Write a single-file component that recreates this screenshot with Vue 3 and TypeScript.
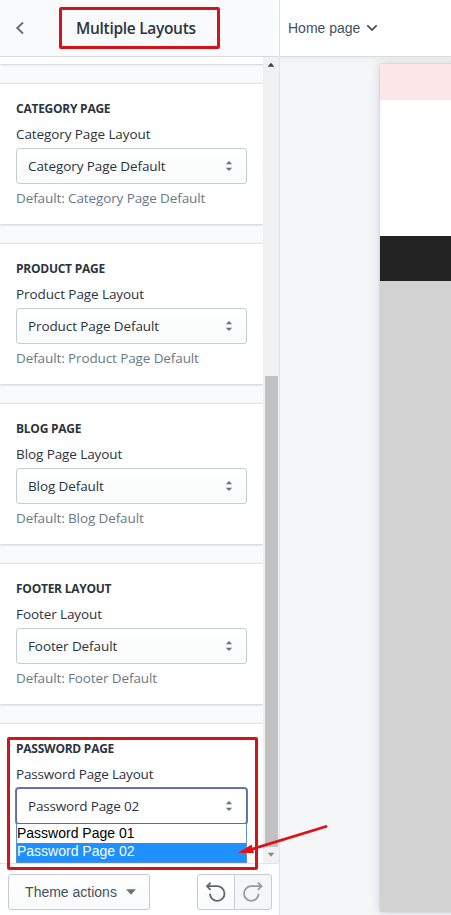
<script setup lang="ts">
interface Section {
  heading: string
  label: string
  value: string
}

const sections: Section[] = [
  { heading: 'CATEGORY PAGE', label: 'Category Page Layout', value: 'Category Page Default' },
  { heading: 'PRODUCT PAGE', label: 'Product Page Layout', value: 'Product Page Default' },
  { heading: 'BLOG PAGE', label: 'Blog Page Layout', value: 'Blog Default' },
  { heading: 'FOOTER LAYOUT', label: 'Footer Layout', value: 'Footer Default' },
]

const options: string[] = ['Password Page 01', 'Password Page 02']
const selected = 'Password Page 02'
</script>

<template>
  <div class="editor">
    <aside class="sidebar">
      <header class="side-head">
        <svg class="back" width="10" height="14" viewBox="0 0 10 14"><path d="M8 1.5 2.3 7 8 12.5" fill="none" stroke="#637381" stroke-width="2" /></svg>
        <h1 class="title">Multiple Layouts</h1>
      </header>

      <div class="body">
        <div class="panels">
          <div class="sliver"></div>
          <section v-for="s in sections" :key="s.heading" class="card">
            <h2>{{ s.heading }}</h2>
            <label>{{ s.label }}</label>
            <div class="select">
              <span>{{ s.value }}</span>
              <svg width="8" height="12" viewBox="0 0 8 12"><path d="M0.8 4.2 4 1l3.2 3.2zM0.8 7.8 4 11l3.2-3.2z" fill="#637381" /></svg>
            </div>
            <p>Default: {{ s.value }}</p>
          </section>
          <section class="card last">
            <h2>PASSWORD PAGE</h2>
            <label>Password Page Layout</label>
            <div class="select focused">
              <span>{{ selected }}</span>
              <svg width="8" height="12" viewBox="0 0 8 12"><path d="M0.8 4.2 4 1l3.2 3.2zM0.8 7.8 4 11l3.2-3.2z" fill="#637381" /></svg>
              <ul class="options">
                <li v-for="o in options" :key="o" :class="{ active: o === selected }">{{ o }}</li>
              </ul>
            </div>
          </section>
        </div>
        <div class="scrollbar">
          <svg width="16" height="17" viewBox="0 0 16 17"><path d="M4.5 10 8 6l3.5 4z" fill="#404040" /></svg>
          <div class="thumb"></div>
          <svg width="16" height="17" viewBox="0 0 16 17"><path d="M4.5 6 8 10l3.5-4z" fill="#8c8c8c" /></svg>
        </div>
      </div>

      <footer class="side-foot">
        <button class="btn theme">
          <span>Theme actions</span>
          <svg width="10" height="6" viewBox="0 0 10 6"><path d="M0 0.3h10L5 5.7z" fill="#637381" /></svg>
        </button>
        <div class="history">
          <button class="btn undo">
            <svg width="22" height="22" viewBox="0 0 22 22" fill="none" stroke="#5b6873" stroke-width="1.8"><path d="M2 5.2H12.2A7.3 7.3 0 1 1 4.9 12.8M5.6 1.6 2 5.2l3.6 3.6" /></svg>
          </button>
          <button class="btn redo">
            <svg width="22" height="22" viewBox="0 0 22 22" fill="none" stroke="#919ba5" stroke-width="1.8"><path d="M19.5 5.2H9.3A7.3 7.3 0 1 0 16.6 12.8M15.9 1.6 19.5 5.2l-3.6 3.6" /></svg>
          </button>
        </div>
      </footer>
    </aside>

    <main class="preview">
      <header class="preview-head">
        <span>Home page</span>
        <svg width="12" height="8" viewBox="0 0 12 8"><path d="M1.3 1.3 6 6l4.7-4.7" fill="none" stroke="#4a5661" stroke-width="1.8" /></svg>
      </header>
      <div class="canvas">
        <div class="page">
          <div class="announce"></div>
          <div class="store-head"></div>
          <div class="store-nav"></div>
          <div class="store-body"></div>
        </div>
      </div>
    </main>

    <div class="mark mark-title"></div>
    <div class="mark mark-select"></div>
    <svg class="arrow" width="92" height="34" viewBox="0 0 92 34">
      <path d="M89 2.5 14 25.5" stroke="#dc1418" stroke-width="2.8" stroke-linecap="round" />
      <path d="M1 29 14.5 20.5 17 29z" fill="#e81015" />
    </svg>
  </div>
</template>

<style>
body {
  margin: 0;
  overflow: hidden;
}
</style>

<style scoped>
* {
  box-sizing: border-box;
}
.editor {
  position: relative;
  display: flex;
  width: 451px;
  height: 915px;
  overflow: hidden;
  background: #f4f6f8;
  color: #2b343e;
  font-family: "Open Sans", "Noto Sans", sans-serif;
  font-size: 14px;
}
.sidebar {
  display: flex;
  flex-direction: column;
  flex: none;
  width: 280px;
  border-right: 1px solid #dfe3e8;
  background: #f9fafb;
}
.side-head {
  display: flex;
  align-items: center;
  flex: none;
  height: 57px;
  padding-left: 15px;
  border-bottom: 1px solid #d9dcdf;
}
.title {
  margin: 0 0 0 51px;
  font-size: 15.5px;
  line-height: 24px;
  font-weight: 600;
  letter-spacing: -0.3px;
}
.body {
  display: flex;
  flex: 1;
  min-height: 0;
}
.panels {
  flex: 1;
  min-width: 0;
  overflow: hidden;
}
.sliver {
  height: 7px;
  background: #fff;
  box-shadow: 0 1px 2px rgba(33, 43, 54, 0.2);
}
.card {
  height: 141px;
  margin-top: 19px;
  padding: 15px 16px 0;
  border-top: 1px solid #e2e5e8;
  background: #fff;
  box-shadow: 0 1px 2px rgba(33, 43, 54, 0.2);
}
h2 {
  margin: 0 0 5px;
  font-size: 12px;
  line-height: 20px;
  font-weight: 700;
  letter-spacing: -0.25px;
}
label {
  display: block;
  height: 24px;
  line-height: 20px;
  font-size: 13.5px;
  letter-spacing: -0.09px;
}
.select {
  position: relative;
  display: flex;
  align-items: center;
  justify-content: space-between;
  width: 231px;
  height: 36px;
  padding: 0 13px 0 11px;
  border: 1px solid #c4cdd5;
  border-radius: 3px;
  background: linear-gradient(#fff, #f9fafb);
  font-size: 13.5px;
  letter-spacing: -0.1px;
}
.last label,
.focused {
  letter-spacing: -0.18px;
}
.focused {
  background: #fff;
  border-color: #5f6aa8;
  box-shadow: 0 0 0 1px #6f78ab;
}
.card p {
  margin: 4px 0 0;
  line-height: 20px;
  font-size: 13.5px;
  letter-spacing: -0.11px;
  color: #6b7986;
}
.options {
  position: absolute;
  top: 35px;
  left: -1px;
  width: 231px;
  height: 39px;
  margin: 0;
  padding: 0;
  border: 1px solid #5c8fd0;
  border-top: 0;
  background: #fff;
  list-style: none;
  font: 14px/18px "Liberation Sans", Arial, sans-serif;
  letter-spacing: 0;
  color: #000;
}
.options li {
  height: 19px;
}
.options .active {
  line-height: 17px;
  background: #1e90ff;
  color: #fff;
}
.scrollbar {
  display: flex;
  flex-direction: column;
  flex: none;
  width: 16px;
  background: #f1f1f1;
}
.thumb {
  flex: none;
  width: 13px;
  height: 471px;
  margin: 302px 0 0 2px;
  background: #c1c1c1;
}
.side-foot {
  display: flex;
  align-items: center;
  justify-content: space-between;
  flex: none;
  height: 52px;
  padding: 5px 7px 0 8px;
  border-top: 1px solid #dfe3e8;
  background: #fff;
}
.btn {
  display: flex;
  align-items: center;
  justify-content: center;
  height: 36px;
  margin: 0;
  padding: 0;
  border: 1px solid #c4cdd5;
  border-radius: 3px;
  background: linear-gradient(#fff, #f9fafb);
  color: #454f5b;
  font: 14px/20px "Liberation Sans", Arial, sans-serif;
}
.theme {
  gap: 9px;
  width: 142px;
  padding-left: 3px;
}
.history {
  display: flex;
}
.undo {
  width: 38px;
  border-radius: 3px 0 0 3px;
}
.redo {
  width: 38px;
  margin-left: -1px;
  border-radius: 0 3px 3px 0;
  background: #f4f6f8;
}
.preview {
  display: flex;
  flex-direction: column;
  flex: 1;
  min-width: 0;
}
.preview-head {
  display: flex;
  align-items: center;
  gap: 6px;
  flex: none;
  height: 57px;
  padding-left: 8px;
  border-bottom: 1px solid #d9dcdf;
  background: #fff;
  color: #454f5b;
  font: 14px/20px "Liberation Sans", Arial, sans-serif;
}
.canvas {
  flex: 1;
  min-height: 0;
  padding: 7px 0 4px 100px;
  overflow: hidden;
  background: linear-gradient(#eceef0, #f4f6f8 6px);
}
.page {
  display: flex;
  flex-direction: column;
  width: 90px;
  height: 848px;
  box-shadow: 0 0 10px rgba(33, 43, 54, 0.16), 0 0 2px rgba(33, 43, 54, 0.16);
}
.announce {
  height: 36px;
  background: #fde6e7;
}
.store-head {
  height: 136px;
  background: #fff;
}
.store-nav {
  height: 45px;
  background: #222;
}
.store-body {
  flex: 1;
  background: #d2d2d2;
}
.mark {
  position: absolute;
  border: 3px solid #d5141a;
  border-radius: 2px;
}
.mark-title {
  left: 59px;
  top: 7px;
  width: 161px;
  height: 42px;
}
.mark-select {
  left: 7px;
  top: 737px;
  width: 251px;
  height: 133px;
}
.arrow {
  position: absolute;
  left: 237px;
  top: 824px;
}
</style>
